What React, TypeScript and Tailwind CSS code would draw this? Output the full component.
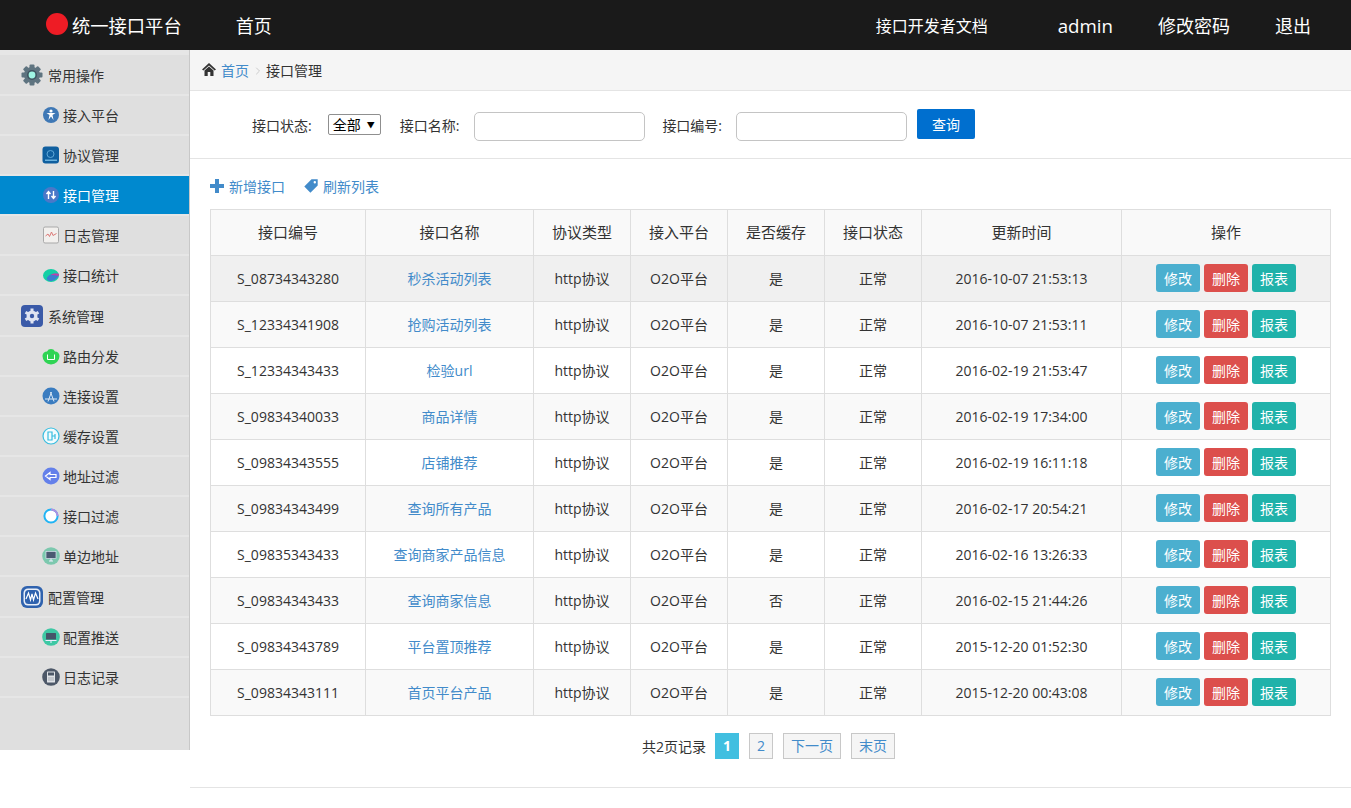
import { ChevronRight } from "lucide-react"
import type { ReactNode } from "react"

const font = "font-['Open_Sans','Noto_Sans_CJK_SC',sans-serif]"

const rows = [
  ["S_08734343280", "秒杀活动列表", "是", "2016-10-07 21:53:13"],
  ["S_12334341908", "抢购活动列表", "是", "2016-10-07 21:53:11"],
  ["S_12334343433", "检验url", "是", "2016-02-19 21:53:47"],
  ["S_09834340033", "商品详情", "是", "2016-02-19 17:34:00"],
  ["S_09834343555", "店铺推荐", "是", "2016-02-19 16:11:18"],
  ["S_09834343499", "查询所有产品", "是", "2016-02-17 20:54:21"],
  ["S_09835343433", "查询商家产品信息", "是", "2016-02-16 13:26:33"],
  ["S_09834343433", "查询商家信息", "否", "2016-02-15 21:44:26"],
  ["S_09834343789", "平台置顶推荐", "是", "2015-12-20 01:52:30"],
  ["S_09834343111", "首页平台产品", "是", "2015-12-20 00:43:08"],
]

const heads = ["接口编号", "接口名称", "协议类型", "接入平台", "是否缓存", "接口状态", "更新时间", "操作"]
const widths = ["w-[155px]", "w-[168px]", "w-[97px]", "w-[97px]", "w-[97px]", "w-[97px]", "w-[200px]", "w-[209px]"]

function Svg({ children, size = 18 }: { children: ReactNode; size?: number }) {
  return (
    <svg width={size} height={size} viewBox="0 0 18 18" className="shrink-0">
      {children}
    </svg>
  )
}

const GearIcon = () => (
  <svg width="22" height="22" viewBox="0 0 22 22" className="shrink-0">
    <g fill="#5f7480">
      {[0, 45, 90, 135, 180, 225, 270, 315].map((a) => (
        <rect key={a} x="8.5" y="0.5" width="5" height="5" rx="1" transform={`rotate(${a} 11 11)`} />
      ))}
      <circle cx="11" cy="11" r="8" />
    </g>
    <circle cx="11" cy="11" r="5" fill="#3f5560" />
    <circle cx="11" cy="11" r="3.4" fill="#9ff5e3" />
  </svg>
)

const SysIcon = () => (
  <svg width="22" height="22" viewBox="0 0 22 22" className="shrink-0">
    <rect width="22" height="22" rx="4" fill="#3a5aa8" />
    <g fill="#dfe4f2">
      {[0, 60, 120, 180, 240, 300].map((a) => (
        <rect key={a} x="9.5" y="3.5" width="3" height="4" transform={`rotate(${a} 11 11)`} />
      ))}
      <circle cx="11" cy="11" r="5.5" />
    </g>
    <circle cx="11" cy="11" r="2.2" fill="#3a5aa8" />
  </svg>
)

const ConfigIcon = () => (
  <svg width="22" height="22" viewBox="0 0 22 22" className="shrink-0">
    <rect width="22" height="22" rx="6" fill="#2f62ae" />
    <rect x="2.5" y="2.5" width="17" height="17" rx="4.5" fill="#e8eef8" />
    <rect x="4" y="4" width="14" height="14" rx="3.5" fill="#2f62ae" />
    <path d="M5 13 L7.5 7 L9.5 14 L11 8 L12.5 14 L14.5 7 L17 13" fill="none" stroke="#fff" strokeWidth="1.2" />
  </svg>
)

const icons: Record<string, ReactNode> = {
  接入平台: (
    <Svg>
      <circle cx="9" cy="9" r="8" fill="#3f78b5" />
      <circle cx="9" cy="5" r="1.6" fill="#fff" />
      <path d="M4.5 7 L13.5 7 L10.5 9 L11.5 14 L9 10.5 L6.5 14 L7.5 9 Z" fill="#fff" />
    </Svg>
  ),
  协议管理: (
    <Svg>
      <rect x="0.5" y="0.5" width="16.5" height="17" rx="3" fill="#0f5f9f" />
      <circle cx="8.5" cy="8" r="3.5" fill="none" stroke="#5fa8d8" />
      <rect x="3" y="13.5" width="12" height="1.5" fill="#6cb2dd" />
    </Svg>
  ),
  接口管理: (
    <Svg>
      <circle cx="9" cy="9" r="8" fill="#4a78c8" />
      <path d="M6.5 13 V6 M4.5 8 L6.5 5.5 L8.5 8 M11.5 5 V12 M9.5 10 L11.5 12.5 L13.5 10" fill="none" stroke="#fff" strokeWidth="1.4" />
    </Svg>
  ),
  日志管理: (
    <Svg>
      <rect x="1.5" y="1" width="15" height="16" rx="1.5" fill="#f2f0ee" stroke="#a9a9a9" />
      <path d="M3.5 10 L6 8 L7.5 10.5 L9.5 6 L11 9.5 L14.5 7.5" fill="none" stroke="#dc7a78" strokeWidth="1" />
    </Svg>
  ),
  接口统计: (
    <Svg>
      <ellipse cx="9" cy="9.5" rx="8" ry="6.5" fill="#14cfa5" />
      <path d="M4.5 13 C5.5 8.5 11 7 17 8 C16.5 12 12 15.5 7 15 Z" fill="#3a7fd0" />
      <path d="M9 9 C11 7.5 14 7.3 17 8 L16.7 10 C14 9.3 11 9.2 9 9 Z" fill="#c43ea8" />
    </Svg>
  ),
  路由分发: (
    <Svg>
      <path d="M5 4.5 A4.5 4.5 0 0 1 13 4.5 A4.5 4.5 0 0 1 17.5 9 A8.5 8.5 0 0 1 0.5 9 A4.5 4.5 0 0 1 5 4.5 Z" fill="#2fd454" />
      <path d="M5.5 7.5 V12.5 H12.5 V7.5" fill="none" stroke="#fff" strokeWidth="1" />
    </Svg>
  ),
  连接设置: (
    <Svg>
      <circle cx="9" cy="9" r="8.5" fill="#3a7cc0" />
      <path d="M3 12 H15 M6 14.5 L9.5 5 M12 14.5 L8.5 5" stroke="#dbe8f5" strokeWidth="1" fill="none" />
    </Svg>
  ),
  缓存设置: (
    <Svg>
      <circle cx="9" cy="9" r="8" fill="#f3fbfd" stroke="#38bde0" strokeWidth="1.2" />
      <path d="M6 5 H10 V13 H6 Z M10 9 H13 M13 7 V12" fill="none" stroke="#38bde0" strokeWidth="1.2" />
    </Svg>
  ),
  地址过滤: (
    <Svg>
      <circle cx="9" cy="9" r="8.5" fill="#6480ea" />
      <path d="M3.5 9 L8 5.5 V7.5 H14 V10.5 H8 V12.5 Z" fill="#6480ea" stroke="#fff" strokeWidth="1.2" />
    </Svg>
  ),
  接口过滤: (
    <Svg>
      <circle cx="9" cy="9" r="6.6" fill="#fff" stroke="#20b4f4" strokeWidth="2" />
      <path d="M9 2.4 A6.6 6.6 0 0 1 15.6 9" fill="none" stroke="#b090e0" strokeWidth="2" />
    </Svg>
  ),
  单边地址: (
    <Svg>
      <circle cx="9" cy="9" r="8.8" fill="#7cc8ae" />
      <rect x="4" y="4.5" width="10" height="7" fill="#4a5a72" stroke="#eef" strokeWidth="0.6" />
      <path d="M7 14 H11 M9 11.5 V14" stroke="#eef" strokeWidth="1" />
    </Svg>
  ),
  配置推送: (
    <Svg>
      <circle cx="9" cy="9" r="8.8" fill="#3ec8a4" />
      <rect x="4" y="5" width="10" height="6.5" rx="0.5" fill="#465569" />
      <path d="M3.5 12.5 H14.5 M8 14 H10" stroke="#eef" strokeWidth="1" />
    </Svg>
  ),
  日志记录: (
    <Svg>
      <circle cx="9" cy="9" r="8.8" fill="#4d5868" />
      <rect x="5" y="3.5" width="8" height="11" rx="0.5" fill="#dfe2e6" />
      <rect x="6" y="4.5" width="6" height="3" fill="#4d5868" />
      <path d="M6 10 H12 M6 12 H12" stroke="#a8adb5" />
    </Svg>
  ),
}

const menu: { name: string; group?: ReactNode }[] = [
  { name: "常用操作", group: <GearIcon /> },
  { name: "接入平台" },
  { name: "协议管理" },
  { name: "接口管理" },
  { name: "日志管理" },
  { name: "接口统计" },
  { name: "系统管理", group: <SysIcon /> },
  { name: "路由分发" },
  { name: "连接设置" },
  { name: "缓存设置" },
  { name: "地址过滤" },
  { name: "接口过滤" },
  { name: "单边地址" },
  { name: "配置管理", group: <ConfigIcon /> },
  { name: "配置推送" },
  { name: "日志记录" },
]

function Sidebar() {
  return (
    <aside className="w-[190px] h-[700px] shrink-0 bg-[#dfdfdf] border-r border-[#c8c8c8] text-[14px] text-[#333]">
      <div className="h-[5px] bg-[#e6e6e6]" />
      {menu.map((m) => {
        const active = m.name === "接口管理"
        return m.group ? (
          <div key={m.name} className="h-[41px] pt-px flex items-center gap-[5px] pl-[21px] border-b-2 border-[#e6e6e6]">
            {m.group}
            <span>{m.name}</span>
          </div>
        ) : (
          <div
            key={m.name}
            className={
              active
                ? "h-[40px] flex items-center gap-[3px] pl-[42px] bg-[#0089cf] text-white border-b-2 border-[#e6e6e6]"
                : "h-[40px] flex items-center gap-[3px] pl-[42px] border-b-2 border-[#e6e6e6]"
            }
          >
            {icons[m.name]}
            <span>{m.name}</span>
          </div>
        )
      })}
    </aside>
  )
}

function Filters() {
  const input = "w-[171px] h-[29px] mt-1 rounded-[5px] border border-[#c4c4c4] bg-white"
  return (
    <div className="h-[68px] flex items-center pl-[62px] border-b border-[#e4e4e4] text-[14px] text-[#333]">
      <span className="pt-px">接口状态:</span>
      <div className="ml-4 w-[53px] h-[21px] flex items-center justify-between pl-[4px] pr-[5px] border border-[#8f8f8f] rounded-[2px] text-black">
        全部
        <span className="text-[8px]">▼</span>
      </div>
      <span className="ml-[19px] pt-px">接口名称:</span>
      <div className={`ml-[15px] ${input}`} />
      <span className="ml-[17px] pt-px">接口编号:</span>
      <div className={`ml-[14px] ${input}`} />
      <button className="ml-[10px] w-[58px] h-[30px] -mt-px rounded-[2px] bg-[#006fcf] text-white">查询</button>
    </div>
  )
}

function DataTable() {
  const cell = "border border-[#dedede] text-center font-normal"
  return (
    <table className="w-[1120px] ml-5 table-fixed border-collapse text-[14px] text-[#333]">
      <colgroup>
        {widths.map((w, i) => (
          <col key={i} className={w} />
        ))}
      </colgroup>
      <thead>
        <tr className="h-[46px] bg-[#f9f9f9]">
          {heads.map((h) => (
            <th key={h} className={`${cell} text-[15px]`}>
              {h}
            </th>
          ))}
        </tr>
      </thead>
      <tbody>
        {rows.map((r, i) => (
          <tr key={r[0] + i} className={i === 0 ? "h-[46px] bg-[#f0f0f0]" : i % 2 ? "h-[46px] bg-[#f9f9f9]" : "h-[46px] bg-white"}>
            <td className={cell}>{r[0]}</td>
            <td className={`${cell} text-[#428bca]`}>{r[1]}</td>
            <td className={cell}>http协议</td>
            <td className={cell}>O2O平台</td>
            <td className={cell}>{r[2]}</td>
            <td className={cell}>正常</td>
            <td className={cell}>{r[3]}</td>
            <td className={cell}>
              <div className="flex justify-center gap-1 pb-[2px] text-white">
                <span className="w-11 h-7 leading-[30px] rounded-[3px] bg-[#4bafcf]">修改</span>
                <span className="w-11 h-7 leading-[30px] rounded-[3px] bg-[#dc4f4c]">删除</span>
                <span className="w-11 h-7 leading-[30px] rounded-[3px] bg-[#20b2aa]">报表</span>
              </div>
            </td>
          </tr>
        ))}
      </tbody>
    </table>
  )
}

function Pagination() {
  const page = "h-[26px] leading-[24px] border border-[#c8c8c8] bg-[#f5f5f5] text-center text-[#428bca]"
  return (
    <div className="flex items-center justify-center mt-[17px] pr-1 text-[14px] text-[#333] pb-[28px] border-b border-[#e4e4e4]">
      <span className="mr-[9px]">共2页记录</span>
      <span className="w-6 h-[26px] leading-[26px] bg-[#41bfe0] text-center text-white font-bold">1</span>
      <span className={`ml-[10px] w-6 ${page}`}>2</span>
      <span className={`ml-[10px] w-[58px] ${page}`}>下一页</span>
      <span className={`ml-[10px] w-11 ${page}`}>末页</span>
    </div>
  )
}

export default function App() {
  return (
    <div className={`${font} h-[808px] bg-white overflow-hidden`}>
      <header className="h-[50px] pt-[2px] bg-[#1a1a1a] flex items-center text-white text-[18px]">
        <span className="ml-[46px] w-[22px] h-[22px] -mt-1 rounded-full bg-[#ee1c25]" />
        <span className="ml-1 text-[18.3px]">统一接口平台</span>
        <span className="ml-[54px]">首页</span>
        <span className="ml-auto text-[16px]">接口开发者文档</span>
        <span className="ml-[70px] text-[18.7px]">admin</span>
        <span className="ml-[45px]">修改密码</span>
        <span className="ml-[45px] mr-[40px]">退出</span>
      </header>
      <div className="flex items-start">
        <Sidebar />
        <main className="flex-1 min-w-0">
          <div className="h-[41px] pt-px flex items-center pl-3 bg-[#f5f5f5] border-b border-[#e4e4e4] text-[14px] text-[#333]">
            <svg width="14" height="13" viewBox="0 0 14 13" fill="#333" className="-mt-[3px]">
              <path d="M7 0 L14 6.5 L12.6 7.6 L7 2.4 L1.4 7.6 L0 6.5 Z" />
              <path d="M2.5 7.5 L7 3.4 L11.5 7.5 V13 H8.3 V9 H5.7 V13 H2.5 Z" />
            </svg>
            <span className="ml-[5px] text-[#428bca]">首页</span>
            <ChevronRight size={12} className="mx-[2.5px] text-[#ccc]" />
            <span>接口管理</span>
          </div>
          <Filters />
          <div className="h-[50px] pt-1 flex items-center pl-5 text-[14px] text-[#428bca]">
            <svg width="14" height="14" viewBox="0 0 14 14" fill="#428bca">
              <path d="M5 0 H9 V5 H14 V9 H9 V14 H5 V9 H0 V5 H5 Z" />
            </svg>
            <span className="ml-[5px]">新增接口</span>
            <svg width="14" height="14" viewBox="0 0 14 14" fill="#428bca" className="ml-[19px]">
              <path fillRule="evenodd" d="M7.5 0.3 H13.7 V6.5 L6.4 13.7 L0.3 7.5 Z M10.8 2 A1.2 1.2 0 1 0 10.8 4.4 A1.2 1.2 0 1 0 10.8 2 Z" />
            </svg>
            <span className="ml-[5px]">刷新列表</span>
          </div>
          <DataTable />
          <Pagination />
        </main>
      </div>
    </div>
  )
}
